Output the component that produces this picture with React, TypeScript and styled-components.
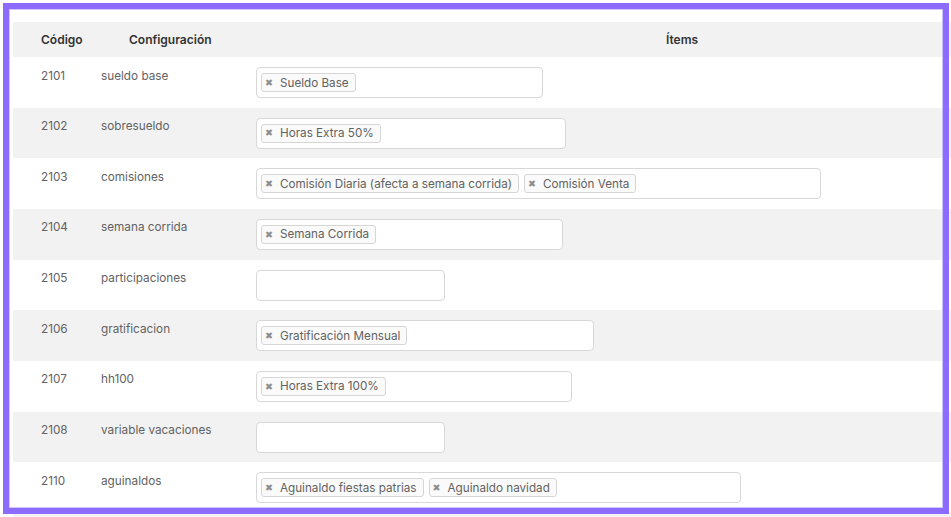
import React from "react";
import styled, { createGlobalStyle } from "styled-components";

const Global = createGlobalStyle`
  html, body {
    margin: 0;
    padding: 0;
    background: #ffffff;
    overflow: hidden;
  }
  body {
    font-family: Inter, "Noto Sans", "Liberation Sans", sans-serif;
    -webkit-font-smoothing: antialiased;
  }
`;

const Page = styled.div`
  position: relative;
  width: 951px;
  height: 517px;
  overflow: hidden;
  padding: 22px 0 0 13px;
  box-sizing: border-box;
`;

const Frame = styled.div`
  position: absolute;
  top: 3px;
  left: 3px;
  width: 946px;
  height: 511px;
  box-sizing: border-box;
  border: 6px solid #8b6cff;
  box-shadow: inset 0 0 0 1px rgba(170, 150, 255, 0.55);
  pointer-events: none;
`;

const Table = styled.div`
  width: 1103px;
  display: flex;
  flex-direction: column;
`;

const HeaderRow = styled.div`
  display: grid;
  grid-template-columns: 88px 147px 1fr;
  align-items: center;
  height: 35px;
  background: #f2f2f2;
`;

const HeadCell = styled.div<{ $align?: "left" | "center"; $pad?: number }>`
  font-size: 12px;
  font-weight: 600;
  color: #333333;
  text-align: ${(p) => p.$align ?? "left"};
  padding-left: ${(p) => p.$pad ?? 0}px;
`;

const Row = styled.div<{ $striped: boolean }>`
  display: grid;
  grid-template-columns: 88px 147px 1fr;
  align-items: start;
  height: 50.67px;
  background: ${(p) => (p.$striped ? "#f2f2f2" : "#ffffff")};
`;

const Cell = styled.div<{ $pad?: number }>`
  font-size: 11.75px;
  line-height: 20px;
  color: #626262;
  padding-top: 8.5px;
  padding-left: ${(p) => p.$pad ?? 0}px;
  white-space: nowrap;
`;

const ItemsCell = styled.div`
  padding: 10px 0 0 8px;
`;

const SelectBox = styled.div<{ $w: number }>`
  width: ${(p) => p.$w}px;
  height: 31px;
  box-sizing: border-box;
  border: 1px solid #d8d8d8;
  border-radius: 4px;
  background: #ffffff;
  padding: 5px 4px;
  display: flex;
  align-items: flex-start;
  gap: 5px;
`;

const Tag = styled.span`
  display: inline-flex;
  align-items: center;
  height: 19px;
  box-sizing: border-box;
  padding: 0 6px 0 3px;
  border: 1px solid #d6d6d6;
  border-radius: 3px;
  background: #fafafa;
  font-size: 11.7px;
  color: #626262;
  white-space: nowrap;
`;

const Remove = styled.span`
  font-family: "DejaVu Sans", sans-serif;
  font-size: 9.5px;
  font-weight: 700;
  color: #8c8c8c;
  margin-right: 7px;
  line-height: 1;
`;

type RowData = { code: string; name: string; items: string[]; w: number };

const rows: RowData[] = [
  { code: "2101", name: "sueldo base", items: ["Sueldo Base"], w: 287 },
  { code: "2102", name: "sobresueldo", items: ["Horas Extra 50%"], w: 310 },
  {
    code: "2103",
    name: "comisiones",
    items: ["Comisión Diaria (afecta a semana corrida)", "Comisión Venta"],
    w: 565,
  },
  { code: "2104", name: "semana corrida", items: ["Semana Corrida"], w: 307 },
  { code: "2105", name: "participaciones", items: [], w: 189 },
  { code: "2106", name: "gratificacion", items: ["Gratificación Mensual"], w: 338 },
  { code: "2107", name: "hh100", items: ["Horas Extra 100%"], w: 316 },
  { code: "2108", name: "variable vacaciones", items: [], w: 189 },
  {
    code: "2110",
    name: "aguinaldos",
    items: ["Aguinaldo fiestas patrias", "Aguinaldo navidad"],
    w: 485,
  },
];

export default function App() {
  return (
    <>
      <Global />
      <Page>
        <Table>
          <HeaderRow>
            <HeadCell $pad={28}>Código</HeadCell>
            <HeadCell $pad={28}>Configuración</HeadCell>
            <HeadCell $align="center">Ítems</HeadCell>
          </HeaderRow>
          {rows.map((r, i) => (
            <Row key={r.code} $striped={i % 2 === 1}>
              <Cell $pad={28}>{r.code}</Cell>
              <Cell>{r.name}</Cell>
              <ItemsCell>
                <SelectBox $w={r.w}>
                  {r.items.map((it) => (
                    <Tag key={it}>
                      <Remove>✖</Remove>
                      {it}
                    </Tag>
                  ))}
                </SelectBox>
              </ItemsCell>
            </Row>
          ))}
          <Row $striped={true} />
        </Table>
        <Frame />
      </Page>
    </>
  );
}
